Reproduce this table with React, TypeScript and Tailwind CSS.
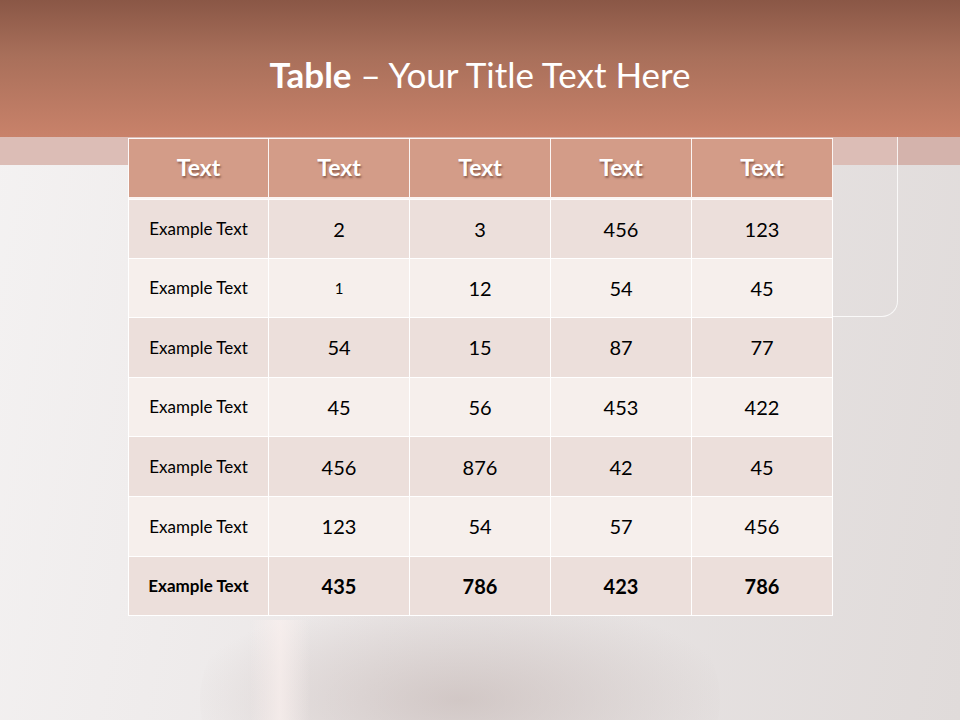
const rows: { label: string; values: string[]; bold?: boolean }[] = [
  { label: "Example Text", values: ["2", "3", "456", "123"] },
  { label: "Example Text", values: ["1", "12", "54", "45"] },
  { label: "Example Text", values: ["54", "15", "87", "77"] },
  { label: "Example Text", values: ["45", "56", "453", "422"] },
  { label: "Example Text", values: ["456", "876", "42", "45"] },
  { label: "Example Text", values: ["123", "54", "57", "456"] },
  { label: "Example Text", values: ["435", "786", "423", "786"], bold: true },
];

const headers = ["Text", "Text", "Text", "Text", "Text"];

function cellClass(bold: boolean | undefined, small: boolean, size: "label" | "num") {
  if (size === "label") {
    return bold
      ? "border-[1.5px] border-white text-center text-[17px] font-bold text-black"
      : "border-[1.5px] border-white text-center text-[17px] text-black";
  }
  if (bold) return "border-[1.5px] border-white text-center text-[20px] font-bold text-black";
  if (small) return "border-[1.5px] border-white text-center text-[15px] text-black";
  return "border-[1.5px] border-white text-center text-[20px] text-black";
}

export default function App() {
  return (
    <div
      className="relative flex h-[720px] w-[960px] flex-col overflow-hidden bg-[linear-gradient(100deg,#f4f2f2_0%,#ebe7e7_45%,#e0dbda_100%)]"
      style={{ fontFamily: "Lato, 'Open Sans', sans-serif" }}
    >
      {/* soft blurred shape at the bottom */}
      <div className="absolute left-[200px] top-[600px] h-[200px] w-[520px] rounded-full bg-[radial-gradient(ellipse_at_center,rgba(190,175,172,0.55)_0%,rgba(200,188,186,0.25)_50%,rgba(220,212,210,0)_75%)]" />
      <div className="absolute left-[250px] top-[620px] h-[120px] w-[60px] bg-[linear-gradient(90deg,rgba(255,255,255,0)_0%,rgba(250,240,238,0.7)_50%,rgba(255,255,255,0)_100%)]" />

      {/* rounded frame behind the table */}
      <div className="absolute left-[600px] top-[137px] h-[180px] w-[298px] rounded-br-[16px] border-b border-r border-white/80" />

      <header className="relative flex h-[137px] shrink-0 items-center justify-center bg-[linear-gradient(180deg,#8a5746_0%,#a86f5a_40%,#c9826a_100%)] pt-[12px]">
        <h1 className="text-[35px] leading-none text-white">
          <span className="font-bold">Table</span> – Your Title Text Here
        </h1>
      </header>

      <div className="flex h-[28px] shrink-0">
        <div className="flex-1 bg-[#dcbdb6]" />
        <div className="w-[62px] bg-[#d4b3ac]" />
      </div>

      <div className="relative -mt-[27px] ml-[128px] w-[704px]">
        <table className="w-[704px] table-fixed border-collapse">
          <colgroup>
            <col className="w-[140px]" />
            <col className="w-[141px]" />
            <col className="w-[141px]" />
            <col className="w-[141px]" />
            <col className="w-[141px]" />
          </colgroup>
          <thead>
            <tr className="h-[60px] bg-[#d39c88]">
              {headers.map((h, i) => (
                <th
                  key={i}
                  className="border-[1.5px] border-b-[3px] border-white/90 pb-[2px] text-[23px] font-bold text-white [text-shadow:1px_2px_2px_rgba(80,40,30,0.55)]"
                >
                  {h}
                </th>
              ))}
            </tr>
          </thead>
          <tbody>
            {rows.map((row, r) => (
              <tr
                key={r}
                className={r % 2 === 0 ? "h-[59.6px] bg-[#ecdfdb]" : "h-[59.6px] bg-[#f6efec]"}
              >
                <td className={cellClass(row.bold, false, "label")}>{row.label}</td>
                {row.values.map((v, i) => (
                  <td key={i} className={cellClass(row.bold, v === "1", "num")}>
                    {v}
                  </td>
                ))}
              </tr>
            ))}
          </tbody>
        </table>
      </div>
    </div>
  );
}
